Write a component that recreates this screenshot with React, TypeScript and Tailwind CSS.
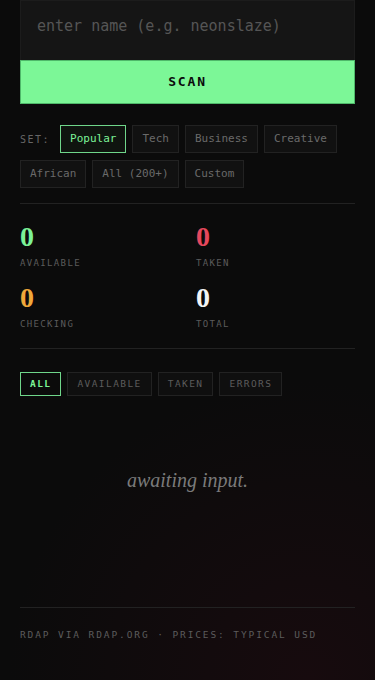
import { useState } from 'react';

const sets = ['Popular', 'Tech', 'Business', 'Creative', 'African', 'All (200+)', 'Custom'];
const filters = ['All', 'Available', 'Taken', 'Errors'];

const stats = [
  { label: 'Available', color: 'text-[#7cf297]' },
  { label: 'Taken', color: 'text-[#e5485d]' },
  { label: 'Checking', color: 'text-[#f0a83a]' },
  { label: 'Total', color: 'text-[#f4f4f4]' },
];

const App = () => {
  const [set, setSet] = useState('Popular');
  const [filter, setFilter] = useState('All');

  return (
    <div className="min-h-[680px] bg-[#0b0b0b] bg-[radial-gradient(circle_at_82%_100%,#170b0e_0%,transparent_40%)] px-5 font-['DejaVu_Sans_Mono',monospace] text-[#777]">
      <div className="h-[60px] border border-[#1c1c1c] border-b-0 bg-[#151515] px-4 pt-[13px]">
        <input
          className="h-[20px] w-full bg-transparent text-[15px] text-[#ddd] outline-none placeholder:text-[#555]"
          placeholder="enter name (e.g. neonslaze)"
        />
      </div>
      <button className="flex h-[44px] w-full items-center justify-center border border-[#4fb86a] bg-[#7cf797] text-[13px] font-bold tracking-[0.14em] text-[#0b0b0b]">
        SCAN
      </button>

      <div className="mt-[21px] flex flex-wrap items-center gap-x-[6px] gap-y-[7px] pb-[15px]">
        <span className="mr-[4px] text-[10px] tracking-[0.15em] text-[#666]">SET:</span>
        {sets.map((s) => (
          <button
            key={s}
            onClick={() => setSet(s)}
            className={
              s === set
                ? 'h-[28px] border border-[#6fd68a] bg-[#0f140f] px-[9px] text-[11px] text-[#7cf297]'
                : 'h-[28px] border border-[#222] bg-[#111] px-[9px] text-[11px] text-[#6a6a6a]'
            }
          >
            {s}
          </button>
        ))}
      </div>

      <div className="border-t border-[#222]" />

      <div className="grid grid-cols-2 gap-x-[17px] gap-y-[12px] pt-[18px] pb-[17px]">
        {stats.map((s) => (
          <div key={s.label} className="flex flex-col">
            <span className={`font-['Liberation_Serif',serif] text-[28px] font-bold leading-[30px] ${s.color}`}>0</span>
            <span className="mt-[5px] text-[9px] uppercase tracking-[0.15em] text-[#5c5c5c]">{s.label}</span>
          </div>
        ))}
      </div>

      <div className="border-t border-[#222]" />

      <div className="mt-[23px] flex gap-[6px]">
        {filters.map((f) => (
          <button
            key={f}
            onClick={() => setFilter(f)}
            className={
              f === filter
                ? 'h-[24px] border border-[#6fd68a] px-[9px] text-[9.5px] font-bold uppercase tracking-[0.15em] text-[#7cf297]'
                : 'h-[24px] border border-[#222] bg-[#0f0f0f] px-[9px] text-[9.5px] uppercase tracking-[0.15em] text-[#5c5c5c]'
            }
          >
            {f}
          </button>
        ))}
      </div>

      <div className="flex h-[211px] justify-center pt-[72px]">
        <span className="font-['Liberation_Serif',serif] text-[20px] leading-[24px] italic text-[#7a7a7a]">awaiting input.</span>
      </div>

      <div className="border-t border-[#222]" />
      <div className="pt-[20px] text-[9.5px] tracking-[0.2em] text-[#5c5c5c]">
        RDAP VIA RDAP.ORG · PRICES: TYPICAL USD
      </div>
    </div>
  );
};

export default App;
